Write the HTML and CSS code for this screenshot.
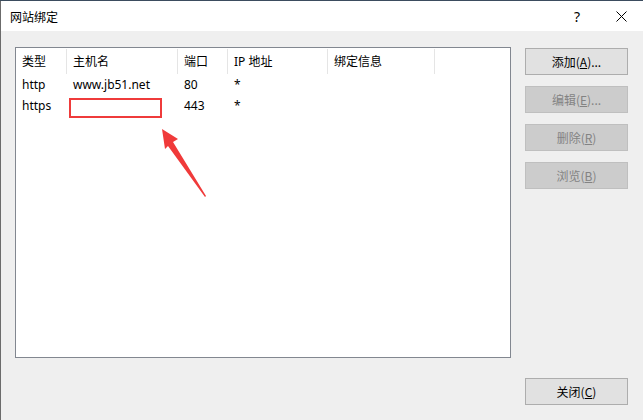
FILE: index.html
```html
<!DOCTYPE html>
<html lang="zh-CN">

<head>
  <meta charset="UTF-8">
  <meta name="viewport" content="width=device-width, initial-scale=1.0">
  <title>网站绑定</title>
  <link rel="stylesheet" href="styles.css">
</head>

<body>
  <div class="desk"></div>
  <div class="dialog">
    <div class="titlebar">
      <span class="title">网站绑定</span>
      <span class="help">?</span>
      <span class="close-x">
        <svg width="11" height="11" viewBox="0 0 11 11">
          <path d="M0.5 0.5 L10.5 10.5 M10.5 0.5 L0.5 10.5" stroke="#000" stroke-width="1" fill="none" />
        </svg>
      </span>
    </div>

    <div class="body">
      <div class="list">
        <div class="row head">
          <div class="cell c1">类型</div>
          <div class="cell c2">主机名</div>
          <div class="cell c3">端口</div>
          <div class="cell c4">IP 地址</div>
          <div class="cell c5">绑定信息</div>
        </div>
        <div class="row">
          <div class="cell c1">http</div>
          <div class="cell c2">www.jb51.net</div>
          <div class="cell c3">80</div>
          <div class="cell c4">*</div>
          <div class="cell c5"></div>
        </div>
        <div class="row">
          <div class="cell c1">https</div>
          <div class="cell c2"><span class="mark"></span></div>
          <div class="cell c3">443</div>
          <div class="cell c4">*</div>
          <div class="cell c5"></div>
        </div>
      </div>

      <div class="side">
        <div class="actions">
          <button class="btn">添加(<u>A</u>)...</button>
          <button class="btn" disabled>编辑(<u>E</u>)...</button>
          <button class="btn" disabled>删除(<u>R</u>)</button>
          <button class="btn" disabled>浏览(<u>B</u>)</button>
        </div>
        <button class="btn">关闭(<u>C</u>)</button>
      </div>
    </div>

    <!-- 标注箭头 -->
    <svg class="arrow" width="50" height="72" viewBox="0 0 50 72">
      <polygon points="1,1 17,11 12,14 45,68 44,69 7,18 4,21" fill="#f03a3a" />
    </svg>
  </div>
</body>

</html>
```

FILE: styles.css
```css
* {
  box-sizing: border-box;
}

html,
body {
  margin: 0;
  padding: 0;
}

body {
  width: 643px;
  height: 420px;
  overflow: hidden;
  font-family: "Segoe UI", "Noto Sans", "Noto Sans CJK SC", sans-serif;
  font-size: 12px;
  color: #000;
  background: #efefef;
}

.desk {
  height: 1px;
  background: #3b4c5e;
}

.dialog {
  position: relative;
  height: 419px;
  border-left: 1px solid #6b6b6b;
  background: #efefef;
}

.titlebar {
  display: flex;
  align-items: center;
  height: 30px;
  background: #fff;
}

.title {
  margin-left: 9px;
  font-family: "Noto Sans CJK SC", sans-serif;
  font-size: 12px;
}

.help {
  margin-left: auto;
  margin-right: 36px;
  font-size: 14px;
}

.close-x {
  display: flex;
  margin-right: 16px;
}

.body {
  display: flex;
  padding: 16px 0 0 14px;
}

.list {
  width: 496px;
  height: 311px;
  border: 1px solid #828790;
  background: #fff;
}

.row {
  display: flex;
  height: 21px;
  align-items: center;
}

.row.head {
  height: 25px;
  margin-top: 1px;
}

.cell {
  position: relative;
  height: 100%;
  display: flex;
  align-items: center;
  padding-left: 7px;
  white-space: nowrap;
}

.head .cell {
  border-right: 1px solid #e5e5e5;
  padding-bottom: 2px;
}

.c1 { width: 51px; padding-left: 6px; }
.c2 { width: 111px; padding-left: 6px; }
.c3 { width: 50px; padding-left: 6px; }
.c4 { width: 100px; padding-left: 6px; }
.c5 { width: 107px; padding-left: 6px; }

.mark {
  position: absolute;
  left: 2px;
  top: 3px;
  width: 93px;
  height: 20px;
  border: 2px solid #ef3b3b;
}

.side {
  display: flex;
  flex-direction: column;
  justify-content: space-between;
  margin-left: 14px;
  padding-top: 1px;
  height: 358px;
}

.actions {
  display: flex;
  flex-direction: column;
  gap: 11px;
}

.btn {
  width: 103px;
  height: 27px;
  padding: 0;
  font-family: "Noto Sans CJK SC", sans-serif;
  font-size: 12px;
  color: #000;
  background: #e1e1e1;
  border: 1px solid #adadad;
}

.btn[disabled] {
  color: #838383;
  background: #cccccc;
  border-color: #bfbfbf;
}

.arrow {
  position: absolute;
  left: 160px;
  top: 127px;
}
```
